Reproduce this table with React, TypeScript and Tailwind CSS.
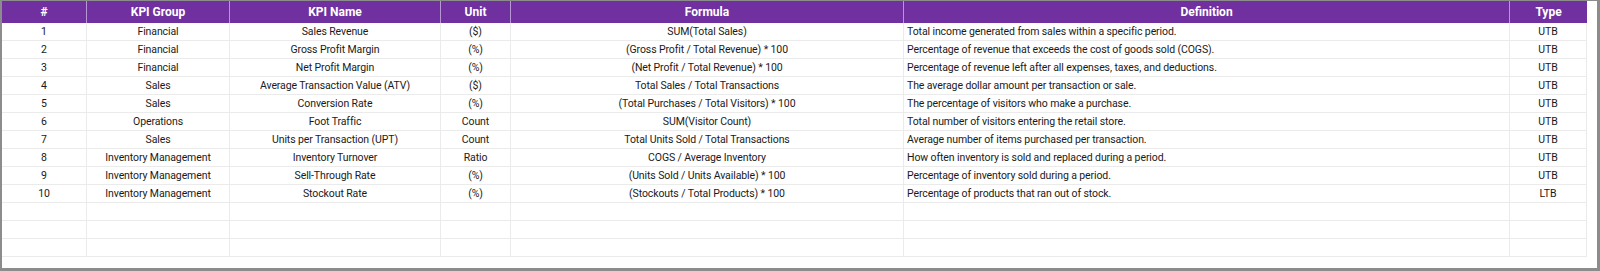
import React from 'react';

const columns = [
  { key: 'id', label: '#', width: 'w-[85px]', align: 'text-center' },
  { key: 'group', label: 'KPI Group', width: 'w-[143px]', align: 'text-center' },
  { key: 'name', label: 'KPI Name', width: 'w-[211px]', align: 'text-center' },
  { key: 'unit', label: 'Unit', width: 'w-[70px]', align: 'text-center' },
  { key: 'formula', label: 'Formula', width: 'w-[393px]', align: 'text-center' },
  { key: 'definition', label: 'Definition', width: 'w-[606px]', align: 'text-left pl-[3px]' },
  { key: 'type', label: 'Type', width: 'w-[77px]', align: 'text-center' },
];

const rows = [
  ['1', 'Financial', 'Sales Revenue', '($)', 'SUM(Total Sales)', 'Total income generated from sales within a specific period.', 'UTB'],
  ['2', 'Financial', 'Gross Profit Margin', '(%)', '(Gross Profit / Total Revenue) * 100', 'Percentage of revenue that exceeds the cost of goods sold (COGS).', 'UTB'],
  ['3', 'Financial', 'Net Profit Margin', '(%)', '(Net Profit / Total Revenue) * 100', 'Percentage of revenue left after all expenses, taxes, and deductions.', 'UTB'],
  ['4', 'Sales', 'Average Transaction Value (ATV)', '($)', 'Total Sales / Total Transactions', 'The average dollar amount per transaction or sale.', 'UTB'],
  ['5', 'Sales', 'Conversion Rate', '(%)', '(Total Purchases / Total Visitors) * 100', 'The percentage of visitors who make a purchase.', 'UTB'],
  ['6', 'Operations', 'Foot Traffic', 'Count', 'SUM(Visitor Count)', 'Total number of visitors entering the retail store.', 'UTB'],
  ['7', 'Sales', 'Units per Transaction (UPT)', 'Count', 'Total Units Sold / Total Transactions', 'Average number of items purchased per transaction.', 'UTB'],
  ['8', 'Inventory Management', 'Inventory Turnover', 'Ratio', 'COGS / Average Inventory', 'How often inventory is sold and replaced during a period.', 'UTB'],
  ['9', 'Inventory Management', 'Sell-Through Rate', '(%)', '(Units Sold / Units Available) * 100', 'Percentage of inventory sold during a period.', 'UTB'],
  ['10', 'Inventory Management', 'Stockout Rate', '(%)', '(Stockouts / Total Products) * 100', 'Percentage of products that ran out of stock.', 'LTB'],
  ['', '', '', '', '', '', ''],
  ['', '', '', '', '', '', ''],
  ['', '', '', '', '', '', ''],
];

export default function App() {
  return (
    <div className="w-[1600px] h-[271px] bg-white border-l-2 border-t border-r-[3px] border-b-[3px] border-[#8c8c8c] font-['Roboto',sans-serif] overflow-hidden">
      <div className="w-[1585px]">
        {/* header */}
        <div className="flex h-[22px] bg-[#7030a0]">
          {columns.map((c, i) => (
            <div
              key={c.key}
              className={`${c.width} shrink-0 flex items-center justify-center text-white font-bold text-[12px] ${i < columns.length - 1 ? 'border-r border-[#b896d6]' : ''}`}
            >
              {c.label}
            </div>
          ))}
        </div>

        {rows.map((r, ri) => (
          <div key={ri} className="flex h-[18px]">
            {columns.map((c, i) => (
              <div
                key={c.key}
                className={`${c.width} ${c.align} shrink-0 border-r border-b border-[#ebebeb] text-[10.5px] tracking-[-0.1px] leading-[17px] text-[#1a1a1a] whitespace-nowrap overflow-hidden`}
              >
                {r[i]}
              </div>
            ))}
          </div>
        ))}
      </div>
    </div>
  );
}
